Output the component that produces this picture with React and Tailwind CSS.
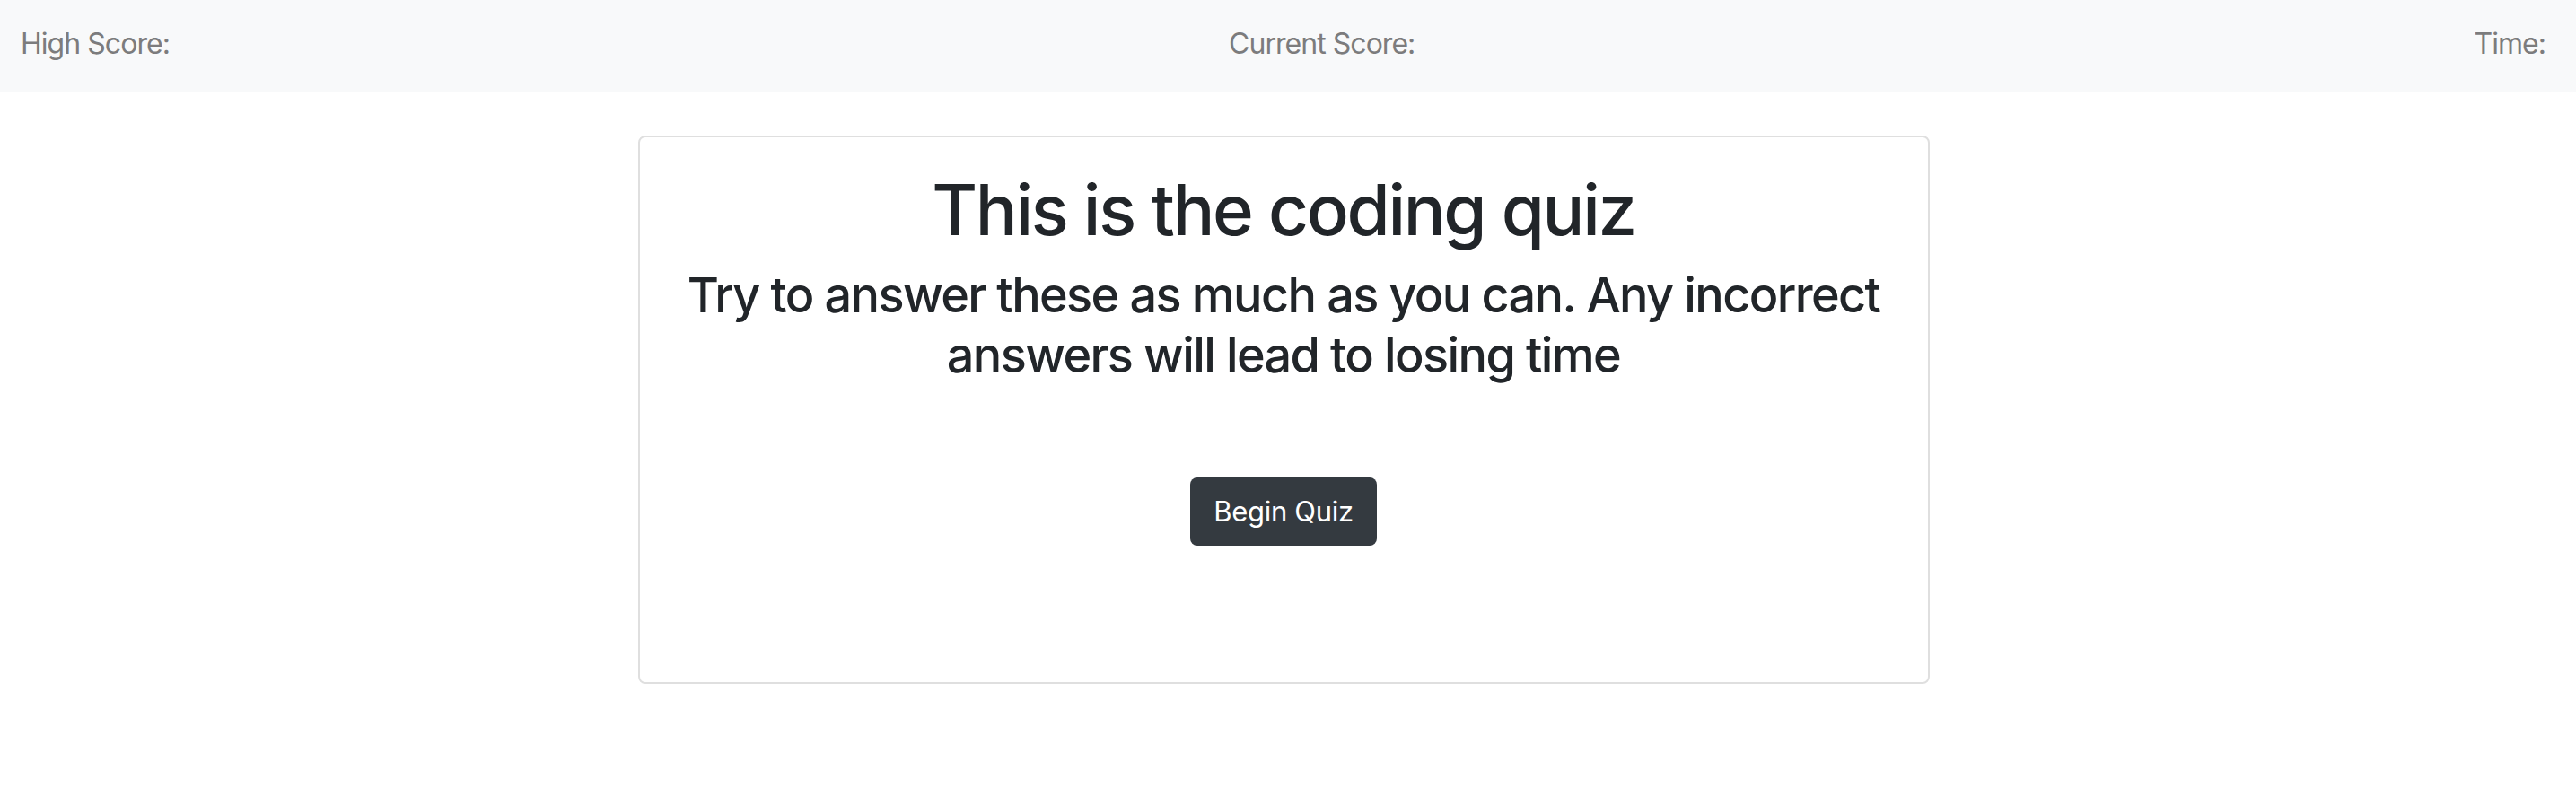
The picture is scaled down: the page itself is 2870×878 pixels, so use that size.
import React from 'react';

function ScoreBar() {
    return (
        <nav className="h-[102px] bg-[#f8f9fa] flex items-center justify-between pl-[23px] pr-[34px] pb-[5px] text-[32px] tracking-[-0.03em] text-[#7c7c7d]">
            <span>High Score:</span>
            <span>Current Score:</span>
            <span>Time:</span>
        </nav>
    );
}

export default function App() {
    return (
        <div className="min-h-screen bg-white font-['Inter','Liberation_Sans',sans-serif]">
            <ScoreBar />
            <main className="flex justify-center pt-[49px] pr-[10px]">
                <div className="w-[1439px] h-[611px] border-2 border-[#dfdfdf] rounded-[8px] px-[36px] pt-[34px] text-center text-[#212529]">
                    <h1 className="text-[78px] leading-[94px] font-medium tracking-[-0.03em]">This is the coding quiz</h1>
                    <h2 className="mt-[14px] text-[54px] leading-[67px] font-medium tracking-[-0.03em]">
                        Try to answer these as much as you can. Any incorrect answers will lead to losing time
                    </h2>
                    <button className="mt-[103px] h-[76px] px-[26px] text-[31px] text-white bg-[#343a40] rounded-[8px] tracking-[-0.01em]">
                        Begin Quiz
                    </button>
                </div>
            </main>
        </div>
    );
}
